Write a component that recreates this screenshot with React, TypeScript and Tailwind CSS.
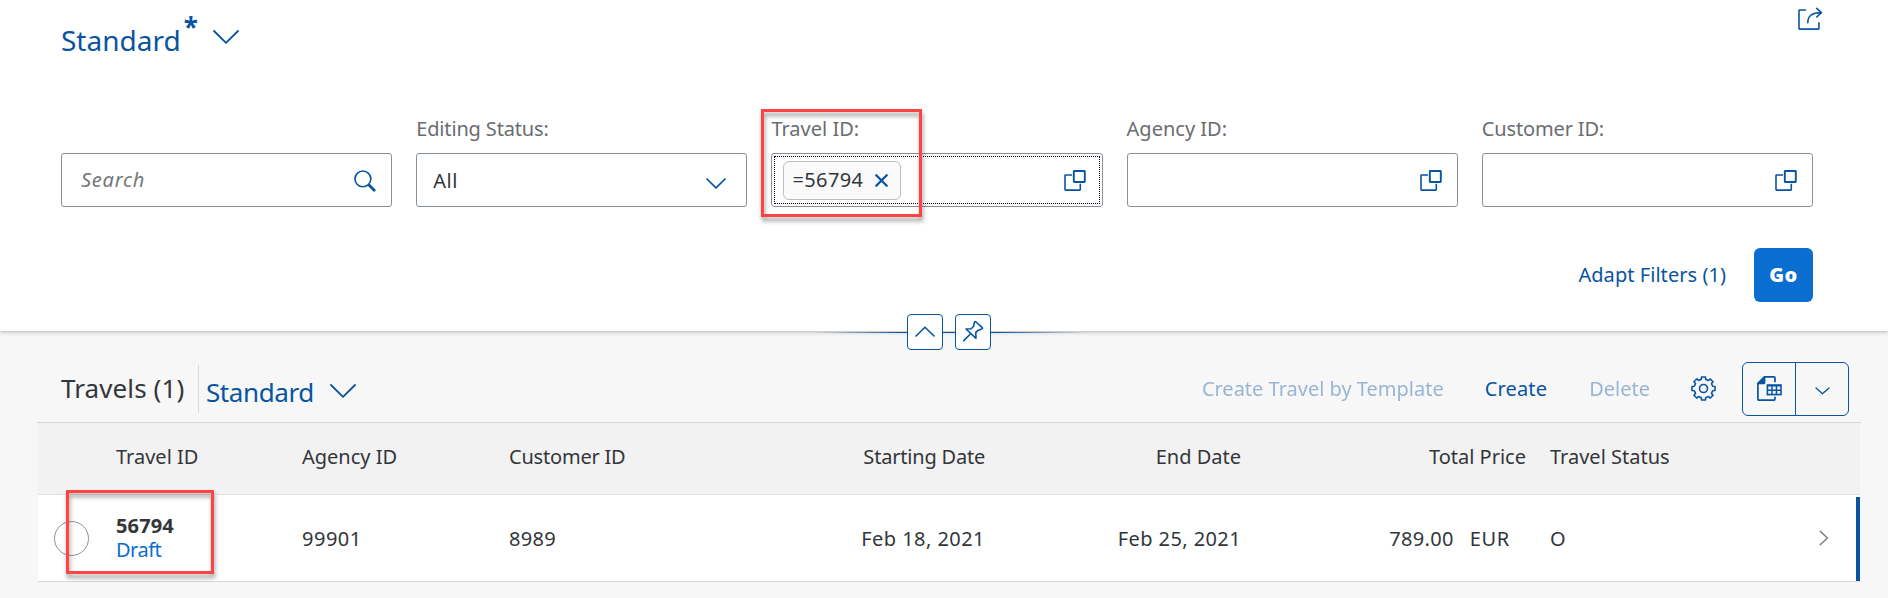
import type { ReactNode } from "react";

function Chevron({ className, w, h, sw = 1.8 }: { className?: string; w: number; h: number; sw?: number }) {
  return (
    <svg width={w} height={h} viewBox={`0 0 ${w} ${h}`} fill="none" stroke="currentColor" strokeWidth={sw} strokeLinecap="round" strokeLinejoin="round" className={className}>
      <path d={`M1 1 L${w / 2} ${h - 1.2} L${w - 1} 1`} />
    </svg>
  );
}

function ValueHelpIcon() {
  return (
    <svg width="22" height="22" viewBox="0 0 22 22" fill="none" stroke="#0854a0" strokeWidth="1.6" className="mt-px">
      <rect x="9.8" y="1" width="11" height="11" rx="0.4" strokeWidth="1.9" />
      <path d="M8 5 H1.6 Q1 5 1 5.6 V19.5 Q1 20.1 1.6 20.1 H15.7 Q16.3 20.1 16.3 19.5 V13.7" />
    </svg>
  );
}

function SearchIcon() {
  return (
    <svg width="22" height="22" viewBox="0 0 22 22" fill="none" stroke="#0854a0" strokeLinecap="round" className="mt-px">
      <circle cx="8.9" cy="8.9" r="7.9" strokeWidth="1.6" />
      <path d="M15 15 L20.2 20.2" strokeWidth="2.8" />
    </svg>
  );
}

function ShareIcon() {
  return (
    <svg width="26" height="24" viewBox="0 0 26 24" fill="none" stroke="#0854a0" strokeWidth="1.6" strokeLinecap="round" strokeLinejoin="round">
      <path d="M7.4 3 H1.6 Q1 3 1 3.6 V21.5 Q1 22.1 1.6 22.1 H20.3 Q20.9 22.1 20.9 21.5 V15.8" />
      <path d="M9.8 15.8 C9.8 9.2 13.5 5.6 23.3 5.6 M18.7 1.4 L23.4 5.6 L18.7 10" />
    </svg>
  );
}

function GearIcon() {
  const pts: string[] = [];
  for (let i = 0; i < 8; i++) {
    const a = (i * Math.PI) / 4;
    [[-0.235, 9.4], [-0.17, 11.7], [0.17, 11.7], [0.235, 9.4]].forEach(([d, r]) => {
      pts.push(`${(12.5 + r * Math.sin(a + d)).toFixed(2)} ${(12.5 - r * Math.cos(a + d)).toFixed(2)}`);
    });
  }
  return (
    <svg width="25" height="25" viewBox="0 0 25 25" fill="none" stroke="#0854a0" strokeWidth="1.6" strokeLinejoin="round">
      <path d={`M${pts.join(" L")} Z`} />
      <circle cx="12.5" cy="12.5" r="4" />
    </svg>
  );
}

function ExcelIcon() {
  return (
    <svg width="25" height="25" viewBox="0 0 25 25" fill="none" stroke="#0854a0" strokeWidth="1.7">
      <path d="M7.8 0.9 H17 Q18 0.9 18 1.9 V6.3 M18 20.8 V23 Q18 24.1 17 24.1 H1.9 Q0.9 24.1 0.9 23.1 V7.6" />
      <path d="M0 8.2 V7 L7 0 H8.4 V6.8 Q8.4 8.2 7 8.2 Z" fill="#0854a0" stroke="none" />
      <path d="M9.6 8.2 H24.8 V19.4 H9.6 Z" fill="#0854a0" stroke="none" />
      <path d="M11.2 10.6 h3 v2.8 h-3z M15.7 10.6 h3 v2.8 h-3z M20.2 10.6 h3 v2.8 h-3z M11.2 15 h3 v2.8 h-3z M15.7 15 h3 v2.8 h-3z M20.2 15 h3 v2.8 h-3z" fill="#f7f7f7" stroke="none" />
    </svg>
  );
}

function PinIcon() {
  return (
    <svg width="22" height="22" viewBox="0 0 22 22" fill="none" stroke="#0854a0" strokeWidth="1.6" strokeLinecap="round" strokeLinejoin="round">
      <path d="M1.8 20.6 L8.1 14.2 M4 9 L9.2 8.8 L11.6 6.3 L12.3 2.6 Q12.7 1 14 2 L20.3 7.6 Q21 8.7 19.6 9 L15.8 10.4 L13.8 12.6 L14 18.3 Z" />
    </svg>
  );
}

function Field({ label, spacing, children }: { label?: string; spacing?: string; children: ReactNode }) {
  return (
    <div className="flex flex-col">
      <div className={`h-[38px] text-[#6a6d70] leading-7 ${spacing ?? ""}`}>{label}</div>
      <div className="flex h-[54px] items-center justify-between rounded-[3px] border border-[#89919a] bg-white">{children}</div>
    </div>
  );
}

const gridCols = "grid grid-cols-[78px_186px_207px_200px_276px_256px_285px_24px_1fr] items-center";

export default function App() {
  return (
    <div className="relative flex h-[598px] w-[1888px] flex-col overflow-hidden bg-[#f7f7f7] font-['Noto_Sans',sans-serif] text-[20px] leading-7 text-[#32363a]">
      <header className="relative h-[331px] shrink-0 bg-white pl-[61px] pr-[75px] shadow-[0_1px_4px_rgba(0,0,0,0.28)]">
        <div className="flex h-[115px] items-start justify-between">
          <div className="flex pt-[20px] text-[#0854a0]">
            <span className="text-[28px] leading-[40px]">Standard</span>
            <span className="-mt-[9px] ml-[3px] text-[26px] font-bold leading-[32px]">*</span>
            <Chevron w={26} h={14} className="ml-[15px] mt-[10px]" />
          </div>
          <div className="-mr-[11px] pt-[7px]"><ShareIcon /></div>
        </div>

        <div className="grid grid-cols-5 gap-6">
          <Field>
            <span className="pl-[19px] italic tracking-[0.75px] text-[#74777a]">Search</span>
            <span className="mr-[15px]"><SearchIcon /></span>
          </Field>
          <Field label="Editing Status:" spacing="tracking-[-0.15px]">
            <span className="mt-[2px] pl-[16px] tracking-[0.5px]">All</span>
            <Chevron w={20} h={11} className="mr-[20px] mt-[6px] text-[#0854a0]" sw={1.7} />
          </Field>
          <Field label="Travel ID:">
            <div className="m-[2px] flex h-[48px] flex-1 items-center justify-between border border-dotted border-black">
              <span className="ml-[8px] flex h-[39px] w-[118px] items-center justify-between rounded-[6px] border border-[#bcbdbe] bg-[#fafafa] pl-[8px] pr-[12px]">
                <span className="tracking-[0.4px]">=56794</span>
                <svg width="13" height="13" viewBox="0 0 13 13" stroke="#0854a0" strokeWidth="2.3" strokeLinecap="round" className="mt-px">
                  <path d="M1.3 1.3 L11.7 11.7 M11.7 1.3 L1.3 11.7" />
                </svg>
              </span>
              <span className="mr-[13px]"><ValueHelpIcon /></span>
            </div>
          </Field>
          <Field label="Agency ID:">
            <span />
            <span className="mr-[15px]"><ValueHelpIcon /></span>
          </Field>
          <Field label="Customer ID:" spacing="tracking-[-0.15px]">
            <span />
            <span className="mr-[15px]"><ValueHelpIcon /></span>
          </Field>
        </div>

        <div className="mt-[41px] flex h-[54px] items-center justify-end gap-[28px]">
          <span className="text-[#0854a0] tracking-[0.05px]">Adapt Filters (1)</span>
          <span className="flex h-[54px] w-[59px] items-center justify-center rounded-[6px] bg-[#0a6ed1] font-black text-white tracking-[0.5px]">Go</span>
        </div>

        <div className="absolute left-[815px] top-[314px] flex h-9 w-[270px] items-center justify-center">
          <div className="absolute left-0 top-[18px] h-px w-full bg-[linear-gradient(90deg,transparent,#0854a0_33%,#0854a0_67%,transparent)]" />
          <div className="relative flex gap-3 pr-[2px]">
            <span className="flex h-9 w-9 items-center justify-center rounded-[4px] border border-[#0854a0] bg-white text-[#0854a0]">
              <Chevron w={20} h={11} className="-mt-[2px] rotate-180" sw={1.6} />
            </span>
            <span className="flex h-9 w-9 items-center justify-center rounded-[4px] border border-[#0854a0] bg-white pb-[3px]"><PinIcon /></span>
          </div>
        </div>
      </header>

      <section className="flex flex-col pl-[37px] pr-[27px]">
        <div className="flex h-[92px] items-center justify-between border-b border-[#d9d9d9] pl-6 pr-[12px] pt-[25px]">
          <div className="flex items-center text-[26px]">
            <span className="-mt-[2px] w-[137px] leading-[48px] tracking-[0.1px]">Travels (1)</span>
            <span className="h-[48px] w-px bg-[#d9d9d9]" />
            <span className="mt-[6px] pl-[7px] tracking-[-0.4px] text-[#0854a0]">Standard</span>
            <Chevron w={26} h={14} className="ml-[16px] mt-[4px] text-[#0854a0]" />
          </div>
          <div className="-mt-px flex h-[54px] items-center text-[#0854a0]">
            <span className="mr-[41px] opacity-40">Create Travel by Template</span>
            <span className="mr-[42px] tracking-[0.15px]">Create</span>
            <span className="mr-[41px] opacity-40">Delete</span>
            <GearIcon />
            <div className="ml-[26px] flex h-[54px] w-[107px] rounded-[6px] border border-[#0854a0]">
              <span className="flex w-[53px] items-center justify-center border-r border-[#0854a0]"><ExcelIcon /></span>
              <span className="flex flex-1 items-center justify-center"><Chevron w={15} h={8} className="mt-[4px]" sw={1.3} /></span>
            </div>
          </div>
        </div>

        <div className="mx-px">
          <div className={`${gridCols} h-[72px] border-b border-[#e0e0e0] bg-[#f2f2f2] pb-[4px]`}>
            <span />
            <span>Travel ID</span>
            <span>Agency ID</span>
            <span className="tracking-[-0.2px]">Customer ID</span>
            <span className="text-right tracking-[-0.2px]">Starting Date</span>
            <span className="text-right">End Date</span>
            <span className="text-right">Total Price</span>
            <span />
            <span>Travel Status</span>
          </div>
          <div className="relative h-[87px] border-b border-[#d9d9d9] bg-white">
            <div className={`${gridCols} h-[86px]`}>
              <span className="ml-[16px] h-[35px] w-[35px] rounded-full border border-[#89919a]" />
              <span className="flex flex-col leading-6">
                <span className="font-bold tracking-[0.15px]">56794</span>
                <span className="text-[#0a6ed1] tracking-[-0.5px]">Draft</span>
              </span>
              <span className="pt-px tracking-[0.5px]">99901</span>
              <span className="pt-px tracking-[0.3px]">8989</span>
              <span className="pt-px text-right tracking-[0.45px]">Feb 18, 2021</span>
              <span className="pt-px text-right tracking-[0.4px]">Feb 25, 2021</span>
              <span className="flex justify-end gap-[16px] pr-[16px] pt-px">
                <span className="tracking-[0.3px]">789.00</span>
                <span className="tracking-[0.7px]">EUR</span>
              </span>
              <span />
              <span className="flex items-center justify-between pr-[31px]">
                <span className="pt-px">O</span>
                <svg width="10" height="16" viewBox="0 0 10 16" fill="none" stroke="#7b7e82" strokeWidth="1.5" strokeLinecap="round" strokeLinejoin="round">
                  <path d="M1.2 1.2 L8.4 8 L1.2 14.8" />
                </svg>
              </span>
            </div>
            <div className="absolute bottom-0 right-0 h-[84px] w-1 bg-[#0854a0]" />
          </div>
        </div>
      </section>

      <div className="absolute left-[761px] top-[109px] h-[108px] w-[161px] border-[3px] border-[#ff4343] [filter:drop-shadow(1px_4px_2px_rgba(0,0,0,0.4))]" />
      <div className="absolute left-[66px] top-[490px] h-[84px] w-[148px] border-[3px] border-[#ff4343] [filter:drop-shadow(1px_4px_2px_rgba(0,0,0,0.4))]" />
    </div>
  );
}
